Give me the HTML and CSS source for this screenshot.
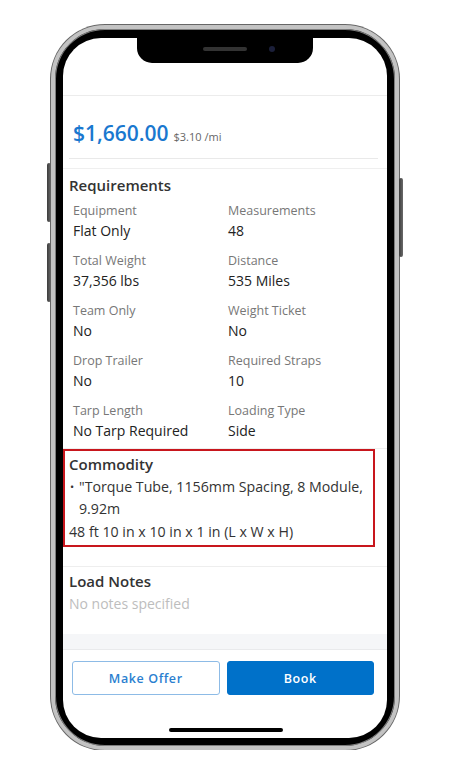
FILE: index.html
```html
<!DOCTYPE html>
<html lang="en">
<head>
<meta charset="utf-8">
<title>Load Details</title>
<link rel="stylesheet" href="styles.css">
</head>
<body>
<div class="stage">
  <div class="phone">
    <span class="side-btn left-1"></span>
    <span class="side-btn left-2"></span>
    <span class="side-btn right-1"></span>
    <div class="screen">
      <div class="notch"><span class="speaker"></span><span class="camera"></span></div>
      <div class="top-space"></div>
      <section class="price-card">
        <div class="price-row">
          <span class="price">$1,660.00</span>
          <span class="rate">$3.10 /mi</span>
        </div>
      </section>
      <div class="inset-rule"></div>
      <section class="section req">
        <h2 class="heading">Requirements</h2>
        <div class="grid">
          <div class="cell"><div class="label">Equipment</div><div class="value">Flat Only</div></div>
          <div class="cell"><div class="label">Measurements</div><div class="value">48</div></div>
          <div class="cell"><div class="label">Total Weight</div><div class="value">37,356 lbs</div></div>
          <div class="cell"><div class="label">Distance</div><div class="value">535 Miles</div></div>
          <div class="cell"><div class="label">Team Only</div><div class="value">No</div></div>
          <div class="cell"><div class="label">Weight Ticket</div><div class="value">No</div></div>
          <div class="cell"><div class="label">Drop Trailer</div><div class="value">No</div></div>
          <div class="cell"><div class="label">Required Straps</div><div class="value">10</div></div>
          <div class="cell"><div class="label">Tarp Length</div><div class="value">No Tarp Required</div></div>
          <div class="cell"><div class="label">Loading Type</div><div class="value">Side</div></div>
        </div>
      </section>
      <section class="commodity">
        <h2 class="heading">Commodity</h2>
        <div class="bullet-item"><span class="dot">•</span><span class="bullet-text">"Torque Tube, 1156mm Spacing, 8 Module, 9.92m</span></div>
        <div class="dims">48 ft 10 in x 10 in x 1 in (L x W x H)</div>
      </section>
      <section class="section notes">
        <h2 class="heading">Load Notes</h2>
        <div class="empty">No notes specified</div>
      </section>
      <div class="band"></div>
      <footer class="actions">
        <button class="btn btn-outline">Make Offer</button>
        <button class="btn btn-solid">Book</button>
      </footer>
      <span class="home-bar"></span>
    </div>
  </div>
</div>
</body>
</html>
```
FILE: styles.css
```css
* { box-sizing: border-box; }
html, body { margin: 0; padding: 0; background: #fff; }
body { font-family: "Open Sans", "Liberation Sans", sans-serif; color: #222; }

.stage { padding: 25px 0 0 51px; }

.phone {
  position: relative;
  width: 348px;
  height: 725px;
  background: #000;
  border: 4px solid #c3c3c3;
  border-radius: 54px;
  box-shadow: 0 0 0 1px #666, inset 0 0 0 1px #7d7d7d;
  padding: 9px 8px 8px;
}

.side-btn {
  position: absolute;
  width: 4px;
  background: linear-gradient(90deg, #3c3c3c, #6a6a6a);
  border-radius: 2px;
}
.left-1 { left: -8px; top: 134px; height: 59px; }
.left-2 { left: -8px; top: 214px; height: 59px; }
.right-1 { right: -8px; top: 149px; height: 79px; }

.screen {
  position: relative;
  width: 324px;
  height: 700px;
  background: #fff;
  border-radius: 38px;
  overflow: hidden;
  display: flex;
  flex-direction: column;
}

.notch {
  position: absolute;
  top: 0;
  left: 74px;
  width: 176px;
  height: 25px;
  background: #000;
  border-radius: 0 0 15px 15px;
}
.speaker {
  position: absolute;
  left: 66px;
  top: 9px;
  width: 44px;
  height: 4px;
  border-radius: 2px;
  background: #333;
}
.camera {
  position: absolute;
  left: 132px;
  top: 8px;
  width: 6px;
  height: 6px;
  border-radius: 50%;
  background: #1b1f3a;
}

.top-space {
  height: 58px;
  flex: none;
  border-bottom: 1px solid #ececec;
}

.price-card {
  flex: none;
  height: 62px;
  padding: 0 10px;
  display: flex;
  align-items: flex-start;
}
.price-row { padding-top: 23px; display: flex; align-items: baseline; gap: 5px; }
.price { font-size: 21px; font-weight: 600; color: #1a78cf; line-height: 28px; }
.rate { font-size: 11px; color: #666; }

.inset-rule {
  flex: none;
  height: 11px;
  margin: 0 9px 0 6px;
  border-top: 1px solid #e9e9e9;
  position: relative;
}
.inset-rule::after {
  content: "";
  position: absolute;
  left: -6px;
  right: -9px;
  bottom: 0;
  border-bottom: 1px solid #efefef;
}

.section { flex: none; padding: 6px 6px 0; }
.heading {
  margin: 0;
  font-size: 15px;
  font-weight: 600;
  color: #333;
  line-height: 20px;
}

.grid {
  display: grid;
  grid-template-columns: 155px 1fr;
  margin-top: 7px;
  padding-left: 4px;
}
.cell { margin-bottom: 10px; }
.cell:nth-last-child(-n+2) { margin-bottom: 6px; }
.label { font-size: 12.5px; color: #777; line-height: 18px; }
.value { font-size: 14px; color: #222; line-height: 22px; }

.req { height: 280px; border-bottom: 1px solid #eee; }

.commodity {
  flex: none;
  width: 312px;
  border: 2px solid #c8161d;
  padding: 3px 4px 2px 4px;
}
.commodity .heading { margin-bottom: 2px; }
.bullet-item { display: flex; font-size: 14.2px; line-height: 22px; color: #333; padding-right: 2px; }
.dot { width: 10px; flex: none; font-size: 11px; padding-left: 1px; }
.bullet-text { flex: 1; }
.dims { font-size: 14.2px; line-height: 22px; color: #333; margin-top: 1px; }

.notes {
  margin-top: 19px;
  border-top: 1px solid #eee;
  padding-top: 4px;
}
.empty { font-size: 14px; color: #bdbdbd; line-height: 22px; margin-top: 2px; }

.band { flex: 1; background: #f5f6f8; border-bottom: 1px solid #e9eaec; margin-top: 19px; }

.actions {
  flex: none;
  height: 88px;
  display: flex;
  gap: 7px;
  padding: 11px 13px 0 9px;
}
.btn {
  flex: 1;
  height: 34px;
  border-radius: 3px;
  font-family: "Open Sans", "Liberation Sans", sans-serif;
  font-size: 12.5px;
  font-weight: 600;
  letter-spacing: 0.6px;
}
.btn-outline { background: #fff; border: 1.5px solid #8dbbe6; color: #2b7fd0; }
.btn-solid { background: #0071c9; border: 1px solid #0071c9; color: #fff; }

.home-bar {
  position: absolute;
  left: 106px;
  bottom: 6px;
  width: 114px;
  height: 4px;
  border-radius: 2px;
  background: #000;
}
```
